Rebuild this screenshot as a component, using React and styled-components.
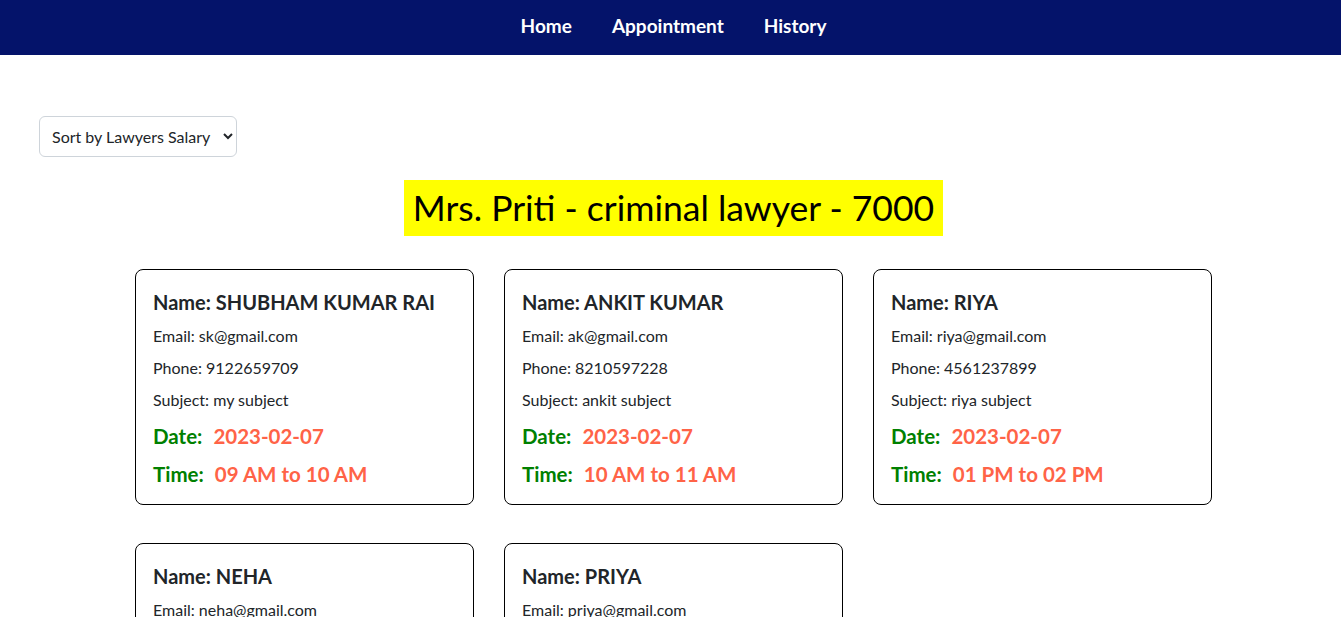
import React from 'react';
import styled, { createGlobalStyle } from 'styled-components';

const GlobalStyle = createGlobalStyle`
  body {
    margin: 0;
    font-family: Lato, "Noto Sans", sans-serif;
    color: #212529;
    background: #fff;
  }
`;

const appointments = [
  { id: 1, name: 'SHUBHAM KUMAR RAI', email: 'sk@gmail.com', phone: '9122659709', subject: 'my subject', date: '2023-02-07', time: '09 AM to 10 AM' },
  { id: 2, name: 'ANKIT KUMAR', email: 'ak@gmail.com', phone: '8210597228', subject: 'ankit subject', date: '2023-02-07', time: '10 AM to 11 AM' },
  { id: 3, name: 'RIYA', email: 'riya@gmail.com', phone: '4561237899', subject: 'riya subject', date: '2023-02-07', time: '01 PM to 02 PM' },
  { id: 4, name: 'NEHA', email: 'neha@gmail.com', phone: '7894561230', subject: 'neha subject', date: '2023-02-08', time: '11 AM to 12 PM' },
  { id: 5, name: 'PRIYA', email: 'priya@gmail.com', phone: '9876543210', subject: 'priya subject', date: '2023-02-08', time: '03 PM to 04 PM' }
];

const NavBar = styled.nav`
  height: 55px;
  box-sizing: border-box;
  padding: 0 0 5px 6px;
  background: #04136a;
  display: flex;
  justify-content: center;
  align-items: center;
  gap: 40px;
`;

const NavLink = styled.a`
  color: #fff;
  font-weight: 700;
  font-size: 19px;
  text-decoration: none;
  cursor: pointer;
`;

const Main = styled.main`
  padding: 61px 0 40px 39px;
`;

const SortSelect = styled.select`
  width: 198px;
  height: 41px;
  padding: 0 2px 0 8px;
  font-family: inherit;
  font-size: 16px;
  color: #212529;
  background: #fff;
  border: 1px solid #ced4da;
  border-radius: 6px;
`;

const TitleRow = styled.div`
  display: flex;
  justify-content: center;
  margin-top: 23px;
  padding-right: 33px;
`;

const Title = styled.h2`
  margin: 0;
  background: #ffff00;
  font-weight: 400;
  font-size: 35.5px;
  line-height: 56px;
  padding: 0 9px;
  color: #000;
`;

const CardGrid = styled.div`
  display: grid;
  grid-template-columns: repeat(3, 339px);
  gap: 38px 30px;
  justify-content: center;
  margin-top: 33px;
  padding-right: 33px;
`;

const Card = styled.div`
  border: 1px solid #000;
  border-radius: 8px;
  padding: 20px 17px 18px;
  display: flex;
  flex-direction: column;
`;

const Name = styled.h5`
  margin: 0 0 11px;
  font-size: 20px;
  line-height: 24px;
  font-weight: 700;
`;

const Info = styled.p`
  margin: 0 0 10px;
  font-size: 16px;
  line-height: 22px;
`;

const Stamp = styled.p`
  margin: ${p => (p.$last ? '14px 0 0' : '3px 0 0')};
  font-size: 20.5px;
  line-height: 24px;
  font-weight: 700;
  color: #008000;
`;

const StampValue = styled.span`
  color: #ff6347;
  margin-left: 11px;
`;

const AppointmentCard = ({ item }) => (
  <Card>
    <Name>Name: {item.name}</Name>
    <Info>Email: {item.email}</Info>
    <Info>Phone: {item.phone}</Info>
    <Info>Subject: {item.subject}</Info>
    <Stamp>
      Date:<StampValue>{item.date}</StampValue>
    </Stamp>
    <Stamp $last>
      Time:<StampValue>{item.time}</StampValue>
    </Stamp>
  </Card>
);

const App = () => (
  <>
    <GlobalStyle />
    <NavBar>
      <NavLink>Home</NavLink>
      <NavLink>Appointment</NavLink>
      <NavLink>History</NavLink>
    </NavBar>
    <Main>
      <SortSelect defaultValue="salary">
        <option value="salary">Sort by Lawyers Salary</option>
      </SortSelect>
      <TitleRow>
        <Title>Mrs. Priti - criminal lawyer - 7000</Title>
      </TitleRow>
      <CardGrid>
        {appointments.map(item => (
          <AppointmentCard key={item.id} item={item} />
        ))}
      </CardGrid>
    </Main>
  </>
);

export default App;
